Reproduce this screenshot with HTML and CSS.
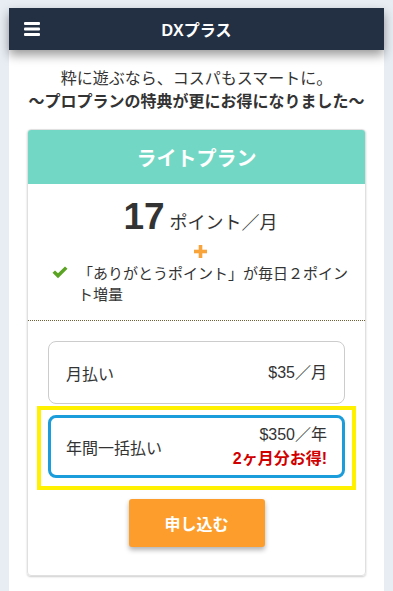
FILE: index.html
```html
<!DOCTYPE html>
<html lang="ja">
<head>
    <meta charset="UTF-8">
    <meta name="viewport" content="width=device-width, initial-scale=1.0">
    <title>DXプラス</title>
    <link rel="stylesheet" href="styles.css">
</head>
<body>

<div class="page">
    <header class="topbar">
        <button class="menu-btn" aria-label="menu">
            <svg width="16" height="14" viewBox="0 0 16 14">
                <rect x="0" y="0" width="16" height="3" rx="1"/>
                <rect x="0" y="5.5" width="16" height="3" rx="1"/>
                <rect x="0" y="11" width="16" height="3" rx="1"/>
            </svg>
        </button>
        <h1 class="brand">DXプラス</h1>
    </header>

    <div class="lead">
        <p>粋に遊ぶなら、コスパもスマートに。</p>
        <p class="lead-strong">〜プロプランの特典が更にお得になりました〜</p>
    </div>

    <section class="plan">
        <h2 class="plan-title">ライトプラン</h2>

        <div class="plan-body">
            <div class="points"><span class="points-num">17</span> ポイント／月</div>
            <div class="plus">
                <svg width="13" height="13" viewBox="0 0 13 13">
                    <rect x="4.7" y="0" width="3.6" height="13"/>
                    <rect x="0" y="4.7" width="13" height="3.6"/>
                </svg>
            </div>
            <ul class="features">
                <li>
                    <svg class="check" width="16" height="13" viewBox="0 0 16 13">
                        <path d="M0.5 6.8 L3 4.4 L6 7.3 L13 0.4 L15.5 2.8 L6 12.2 Z"/>
                    </svg>
                    <span>「ありがとうポイント」が毎日２ポイント増量</span>
                </li>
            </ul>
        </div>

        <div class="options">
            <label class="option">
                <span class="option-name">月払い</span>
                <span class="option-price">$35／月</span>
            </label>
            <div class="highlight">
                <label class="option selected">
                    <span class="option-name">年間一括払い</span>
                    <span class="option-price">$350／年<br><strong class="deal">2ヶ月分お得!</strong></span>
                </label>
            </div>
            <button class="apply">申し込む</button>
        </div>
    </section>
</div>

</body>
</html>
```

FILE: styles.css
```css
* {
    padding: 0;
    margin: 0;
    box-sizing: border-box;
}
body {
    background-color: #e8edf4;
    font-family: "Liberation Sans", "Noto Sans CJK JP", sans-serif;
    color: #333;
}
.page {
    width: 375px;
    min-height: 583px;
    margin: 8px auto 0;
    background-color: #fff;
    padding-bottom: 20px;
}
.topbar {
    height: 42px;
    background-color: #233044;
    display: flex;
    align-items: center;
    position: relative;
    box-shadow: 0 5px 10px rgba(0, 0, 0, 0.4);
}
.menu-btn {
    background: none;
    border: none;
    margin-left: 15px;
    display: flex;
    cursor: pointer;
}
.menu-btn svg {
    fill: #fff;
}
.brand {
    position: absolute;
    left: 0;
    right: 0;
    text-align: center;
    font-size: 16px;
    color: #fff;
    pointer-events: none;
}
.lead {
    padding-top: 17px;
    text-align: center;
    font-size: 16px;
    line-height: 23px;
}
.lead-strong {
    font-weight: bold;
}
.plan {
    margin: 16px 18px 0;
    border: 1px solid #e0e0e0;
    border-radius: 4px;
    box-shadow: 0 1px 2px rgba(0, 0, 0, 0.2);
    overflow: hidden;
}
.plan-title {
    height: 54px;
    background-color: #72d7c4;
    color: #fff;
    font-size: 20px;
    display: flex;
    align-items: center;
    justify-content: center;
}
.plan-body {
    padding: 12px 16px 15px 24px;
    border-bottom: 1px dotted #6e5e36;
}
.points {
    text-align: center;
    font-size: 18px;
    line-height: 41px;
}
.points-num {
    font-size: 37px;
    font-weight: bold;
}
.plus {
    display: flex;
    justify-content: center;
    margin-top: 1px;
}
.plus svg {
    fill: #f9a43a;
}
.features {
    list-style: none;
    margin-top: 5px;
}
.features li {
    display: flex;
    gap: 10px;
    font-size: 15px;
    line-height: 21px;
}
.check {
    fill: #5ba423;
    flex-shrink: 0;
    margin-top: 3px;
}
.options {
    padding: 20px 20px 28px;
    display: flex;
    flex-direction: column;
    align-items: stretch;
}
.option {
    height: 63px;
    border: 1px solid #ccc;
    border-radius: 8px;
    display: flex;
    justify-content: space-between;
    align-items: center;
    padding: 0 17px;
    font-size: 16px;
    cursor: pointer;
}
.option-price {
    text-align: right;
    line-height: 24px;
}
.option.selected {
    border: 3px solid #1b9ddb;
    padding: 0 15px;
}
.deal {
    color: #d10000;
}
.highlight {
    margin: 2px -11px 0;
    border: 4px solid #fff100;
    padding: 5px 7px 8px;
}
.apply {
    align-self: center;
    width: 136px;
    height: 48px;
    margin-top: 9px;
    background-color: #fd9e2c;
    color: #fff;
    border: none;
    border-radius: 3px;
    font-family: inherit;
    font-size: 16px;
    font-weight: bold;
    box-shadow: 0 3px 5px rgba(0, 0, 0, 0.3);
    cursor: pointer;
}
```
